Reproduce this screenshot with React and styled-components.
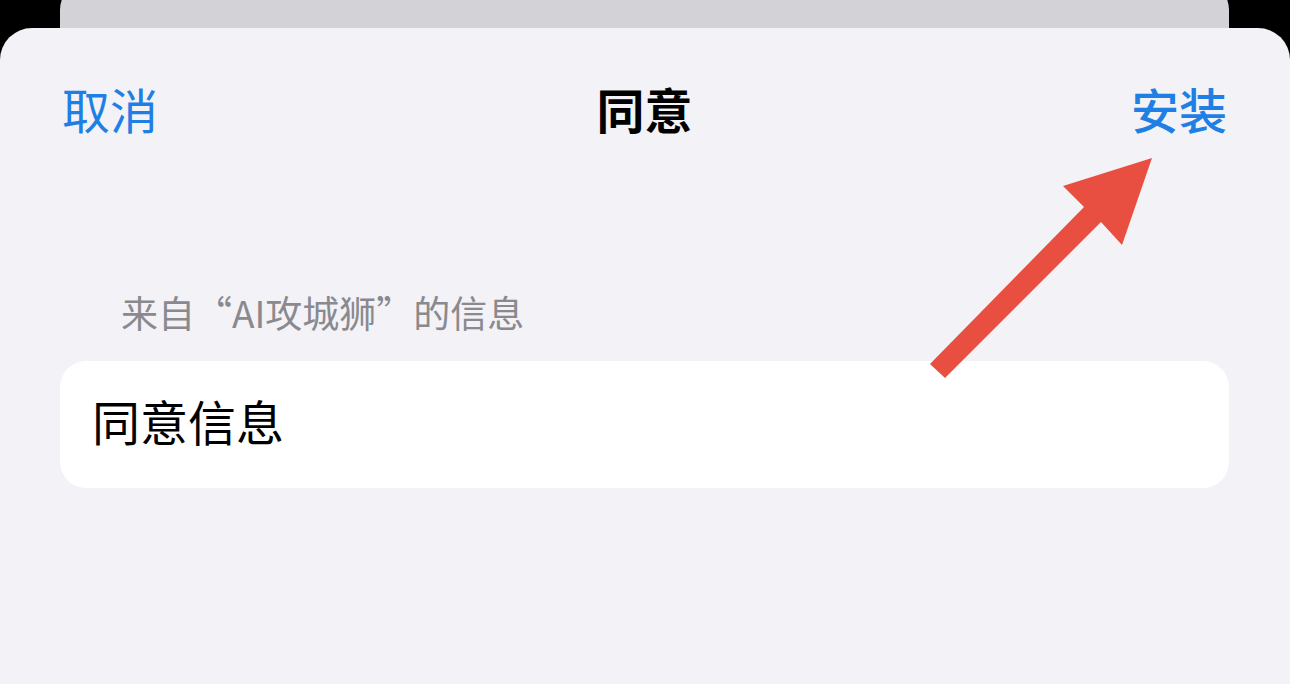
import React from 'react'
import styled, { createGlobalStyle } from 'styled-components'

const GlobalStyle = createGlobalStyle`
  html, body {
    margin: 0;
    padding: 0;
    background: #000;
  }
  body {
    font-family: "Noto Sans CJK SC", "Noto Sans", sans-serif;
  }
`

const Screen = styled.div`
  position: relative;
  width: 1290px;
  height: 684px;
  overflow: hidden;
  background: #000;
  display: flex;
  flex-direction: column;
`

const BackSheet = styled.div`
  margin: -20px 61px 0 60px;
  height: 48px;
  flex-shrink: 0;
  background: #d2d2d7;
  border-radius: 30px 30px 0 0;
`

const Sheet = styled.div`
  flex: 1;
  background: #f2f2f7;
  border-radius: 32px 32px 0 0;
  display: flex;
  flex-direction: column;
`

const NavBar = styled.div`
  display: grid;
  grid-template-columns: 1fr auto 1fr;
  align-items: center;
  padding: 0 63px 0 62px;
  height: 160px;
`

const NavButton = styled.div`
  font-size: 48px;
  font-weight: ${(p) => (p.$strong ? 500 : 400)};
  color: #1f7fe5;
  justify-self: ${(p) => (p.$right ? 'end' : 'start')};
  line-height: 1;
`

const Title = styled.div`
  font-size: 48px;
  font-weight: 700;
  color: #000;
  line-height: 1;
`

const Content = styled.div`
  padding: 106px 61px 0 60px;
  display: flex;
  flex-direction: column;
`

const SectionHeader = styled.div`
  font-size: 37px;
  color: #8a8a8e;
  padding-left: 61px;
  line-height: 1;
  margin-bottom: 30px;
`

const Card = styled.div`
  background: #fff;
  border-radius: 26px;
  height: 127px;
  display: flex;
  align-items: center;
  padding: 0 0 10px 32px;
  box-sizing: border-box;
`

const CardText = styled.div`
  font-size: 48px;
  color: #000;
  line-height: 1;
`

const ArrowLayer = styled.svg`
  position: absolute;
  left: 0;
  top: 0;
  pointer-events: none;
`

const App = () => {
  return (
    <>
      <GlobalStyle />
      <Screen>
        <BackSheet />
        <Sheet>
          <NavBar>
            <NavButton>取消</NavButton>
            <Title>同意</Title>
            <NavButton $right $strong>安装</NavButton>
          </NavBar>
          <Content>
            <SectionHeader>来自“AI攻城狮”的信息</SectionHeader>
            <Card>
              <CardText>同意信息</CardText>
            </Card>
          </Content>
        </Sheet>
        <ArrowLayer width="1290" height="684" viewBox="0 0 1290 684">
          <polygon points="930,364 945,378 1101,222 1122,245 1152,158 1063,186 1084,207" fill="#e84f40" />
        </ArrowLayer>
      </Screen>
    </>
  )
}

export default App
